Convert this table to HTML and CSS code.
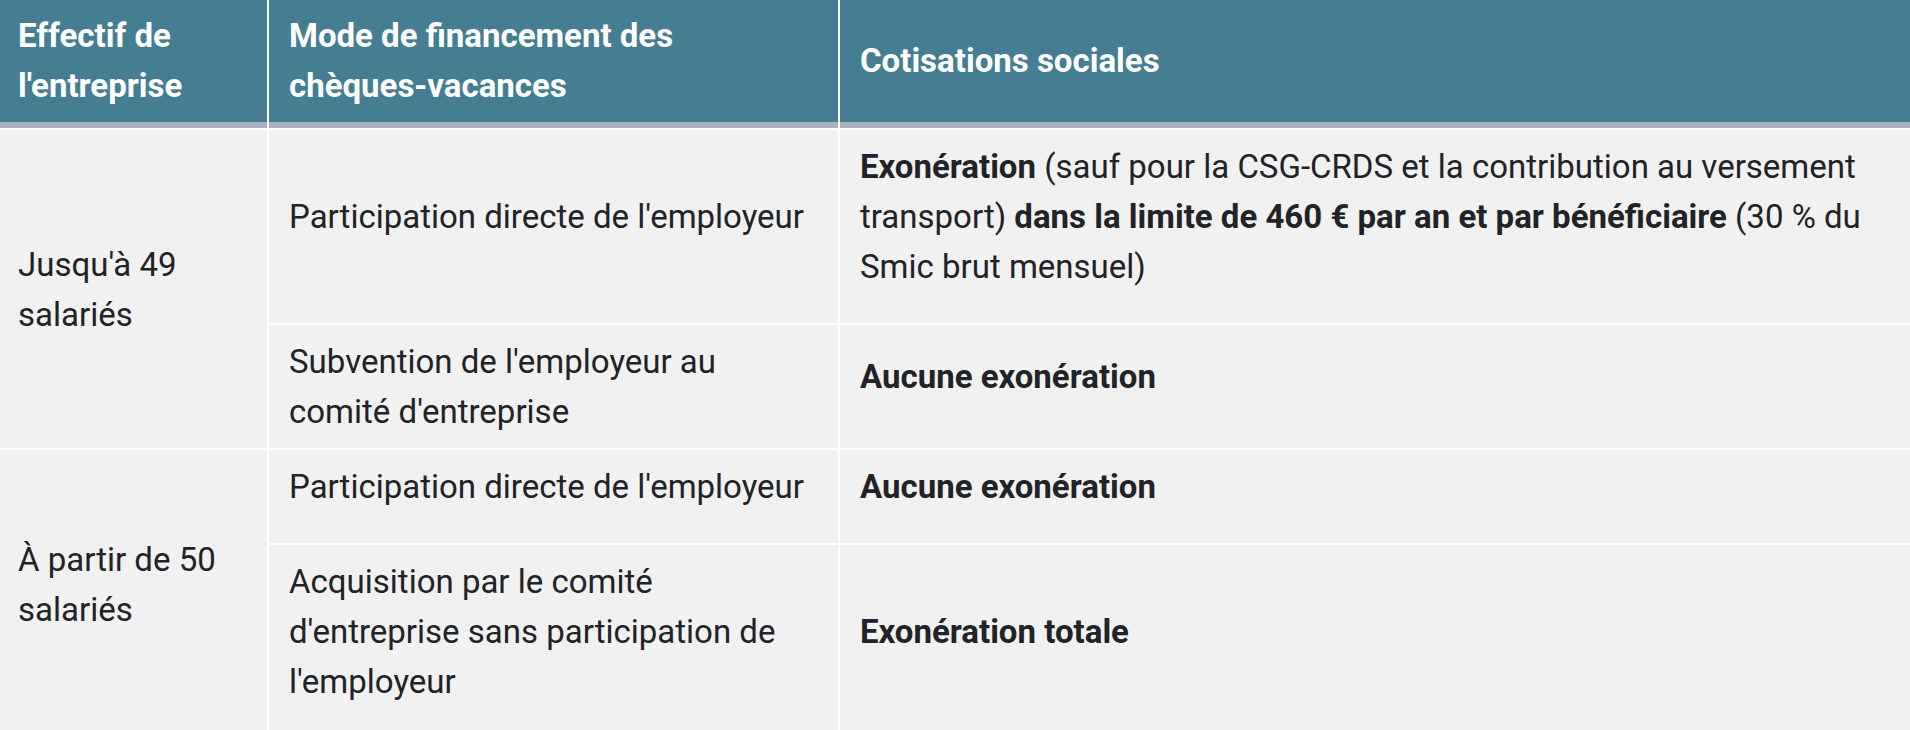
FILE: index.html
```html
<!DOCTYPE html>
<html lang="fr">
<head>
<meta charset="utf-8">
<title>Chèques-vacances</title>
<link rel="stylesheet" href="styles.css">
</head>
<body>
<div class="table">
  <div class="th c1">Effectif de l'entreprise</div>
  <div class="th c2">Mode de financement des chèques-vacances</div>
  <div class="th c3">Cotisations sociales</div>

  <div class="td c1 span2 r1">Jusqu'à 49 salariés</div>
  <div class="td c2 r1 extra">Participation directe de l'employeur</div>
  <div class="td c3 r1 extra"><span><b>Exonération</b> (sauf pour la CSG-CRDS et la contribution au versement transport) <b>dans la limite de 460 € par an et par bénéficiaire</b> (30 % du Smic brut mensuel)</span></div>
  <div class="td c2 r2">Subvention de l'employeur au comité d'entreprise</div>
  <div class="td c3 r2 extra"><b>Aucune exonération</b></div>

  <div class="td c1 span2 r3 extra">À partir de 50 salariés</div>
  <div class="td c2 r3 extra">Participation directe de l'employeur</div>
  <div class="td c3 r3 extra"><b>Aucune exonération</b></div>
  <div class="td c2 r4 extra">Acquisition par le comité d'entreprise sans participation de l'employeur</div>
  <div class="td c3 r4 extra"><b>Exonération totale</b></div>
</div>
</body>
</html>
```

FILE: styles.css
```css
html, body {
  margin: 0;
  padding: 0;
  background: #ffffff;
}

body {
  font-family: Roboto, "Liberation Sans", Arial, sans-serif;
  font-size: 33px;
  line-height: 50px;
  color: #222326;
}

.table {
  display: grid;
  grid-template-columns: 267px 569px 1fr;
  column-gap: 2px;
  row-gap: 2px;
  background: #ffffff;
  width: 1910px;
}

.th {
  background: #457e92;
  color: #ffffff;
  font-weight: 700;
  padding: 11px 20px 11px 18px;
  border-bottom: 6px solid #adb1c0;
  display: flex;
  align-items: center;
}

.th.c2, .th.c3 {
  padding-left: 20px;
}

.td {
  background: #f1f1f1;
  padding: 12px 20px 11px 18px;
  display: flex;
  align-items: center;
}

.td.c2, .td.c3 {
  padding-left: 20px;
}

.td b {
  font-weight: 700;
}

.c1 { grid-column: 1; }
.c2 { grid-column: 2; }
.c3 { grid-column: 3; }

.r1 { grid-row: 2; }
.r2 { grid-row: 3; }
.r3 { grid-row: 4; }
.r4 { grid-row: 5; }

.span2.r1 { grid-row: 2 / span 2; }
.span2.r3 { grid-row: 4 / span 2; }

.extra {
  padding-bottom: 31px;
}
```
